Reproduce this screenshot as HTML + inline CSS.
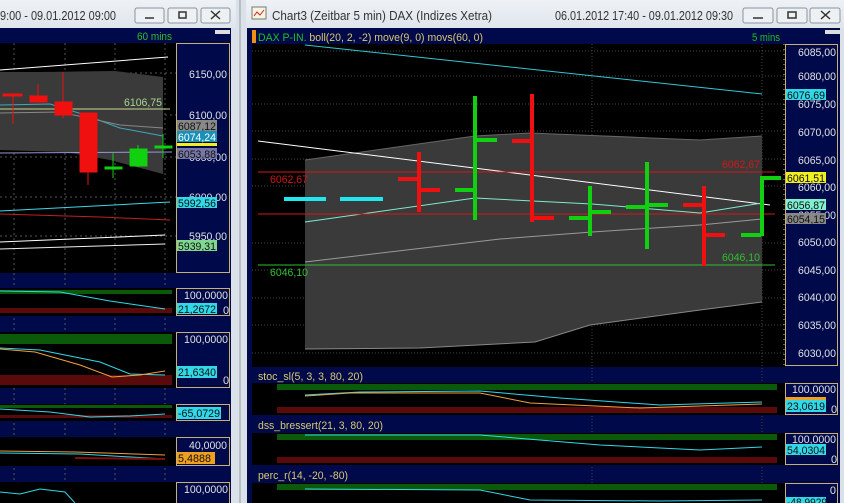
<!DOCTYPE html>
<html><head><meta charset="utf-8"><style>
html,body{margin:0;padding:0;width:844px;height:503px;overflow:hidden;background:#dde3ea;font-family:"Liberation Sans",sans-serif}
svg{display:block}
</style></head><body>
<svg width="844" height="503" xmlns="http://www.w3.org/2000/svg" font-family="Liberation Sans, sans-serif">
<defs>
<linearGradient id="tb" x1="0" y1="0" x2="0" y2="1"><stop offset="0" stop-color="#eef2f6"/><stop offset="1" stop-color="#dfe5ec"/></linearGradient>
</defs>
<rect width="844" height="503" fill="#dbe1e8"/>
<rect x="0" y="0" width="236" height="28" fill="url(#tb)"/>
<rect x="246" y="0" width="598" height="28" fill="url(#tb)"/>
<line x1="240" y1="0" x2="240" y2="503" stroke="#b8bec6" stroke-width="2"/>
<text x="0" y="20" font-size="13" fill="#333" textLength="116" lengthAdjust="spacingAndGlyphs">9:00 - 09.01.2012 09:00</text>
<g fill="none" stroke="#8a949e"><rect x="135" y="8" width="29" height="15" rx="2" fill="#eef1f4"/><rect x="168" y="8" width="29" height="15" rx="2" fill="#eef1f4"/><rect x="201" y="8" width="29" height="15" rx="2" fill="#eef1f4"/>
<rect x="743" y="8" width="30" height="15" rx="2" fill="#eef1f4"/><rect x="777" y="8" width="30" height="15" rx="2" fill="#eef1f4"/><rect x="810" y="8" width="30" height="15" rx="2" fill="#eef1f4"/></g>
<g stroke="#333" stroke-width="1.5" fill="none"><line x1="145" y1="18" x2="154" y2="18"/><rect x="179" y="12" width="7" height="6"/><path d="M211 11l9 8M220 11l-9 8"/>
<line x1="753" y1="18" x2="763" y2="18"/><rect x="788" y="12" width="8" height="6"/><path d="M821 11l9 8M830 11l-9 8"/></g>
<rect x="252" y="7" width="14" height="12" fill="#f4f4e0" stroke="#777"/><path d="M254 16l3-4 3 3 4-5" stroke="#c22" fill="none"/>
<text x="272" y="20" font-size="13" fill="#333" textLength="220" lengthAdjust="spacingAndGlyphs">Chart3 (Zeitbar 5 min)  DAX (Indizes Xetra)</text>
<text x="555" y="20" font-size="13" fill="#333" textLength="178" lengthAdjust="spacingAndGlyphs">06.01.2012 17:40 - 09.01.2012 09:30</text>

<rect x="0" y="28" width="231" height="475" fill="#000a4a"/>
<rect x="0" y="43" width="176" height="230" fill="#000"/>
<text x="137" y="40" font-size="11" fill="#2fbf2f" textLength="35" lengthAdjust="spacingAndGlyphs">60 mins</text>
<rect x="215" y="30" width="15" height="4" fill="#ddd"/>
<g stroke="#555" stroke-dasharray="2,3"><line x1="14" y1="43" x2="14" y2="503"/><line x1="65" y1="43" x2="65" y2="503"/><line x1="115" y1="43" x2="115" y2="503"/><line x1="165" y1="43" x2="165" y2="503"/>
<line x1="0" y1="73" x2="176" y2="73"/><line x1="0" y1="115" x2="176" y2="115"/><line x1="0" y1="157" x2="176" y2="157"/><line x1="0" y1="197" x2="176" y2="197"/><line x1="0" y1="236" x2="176" y2="236"/></g>
<path d="M0 72L40 72L115 71L163 77L163 174L110 160L65 152L0 150Z" fill="#3a3a3a"/>
<line x1="0" y1="70" x2="168" y2="57" stroke="#fff"/>
<line x1="0" y1="109" x2="170" y2="109" stroke="#c8d890"/>
<path d="M0 105L50 104L85 115L120 128L163 136" stroke="#3aa8c0" fill="none"/>
<path d="M0 113L60 112L120 125L163 128" stroke="#888" fill="none"/>
<line x1="0" y1="153" x2="172" y2="152" stroke="#9898d8"/>
<path d="M0 211L170 202" stroke="#3cd8e8" fill="none"/>
<path d="M0 214L100 217L170 220" stroke="#c02020" fill="none"/>
<path d="M0 242L165 235" stroke="#fff" fill="none"/><path d="M0 249L165 244" stroke="#eee" fill="none"/>
<text x="124" y="106" font-size="11" fill="#a8d890" textLength="38" lengthAdjust="spacingAndGlyphs">6106,75</text>
<g fill="#f01010" stroke="#f01010"><line x1="13" y1="95" x2="13" y2="124"/><rect x="3" y="94" width="19" height="2"/>
<line x1="38" y1="84" x2="38" y2="103"/><rect x="30" y="96" width="17" height="6"/>
<line x1="63" y1="72" x2="63" y2="118"/><rect x="55" y="102" width="17" height="13"/>
<line x1="88" y1="113" x2="88" y2="185"/><rect x="80" y="113" width="17" height="59"/></g>
<g fill="#10d010" stroke="#10d010"><line x1="113" y1="153" x2="113" y2="178"/><rect x="105" y="167" width="17" height="2"/>
<line x1="138" y1="145" x2="138" y2="167"/><rect x="130" y="149" width="17" height="17"/>
<line x1="163" y1="134" x2="163" y2="158"/><rect x="155" y="146" width="17" height="2"/></g>
<rect x="176.5" y="43.5" width="53" height="229" fill="#000a4a" stroke="#c8b070"/>
<g font-size="11" fill="#e0e0e0"><text x="189" y="78" textLength="38" lengthAdjust="spacingAndGlyphs">6150,00</text><text x="189" y="119" textLength="38" lengthAdjust="spacingAndGlyphs">6100,00</text><text x="189" y="161" textLength="38" lengthAdjust="spacingAndGlyphs">6050,00</text><text x="189" y="201" textLength="38" lengthAdjust="spacingAndGlyphs">6000,00</text><text x="189" y="240" textLength="38" lengthAdjust="spacingAndGlyphs">5950,00</text></g>
<g font-size="11" fill="#111"><rect x="177" y="120" width="40" height="11" fill="#888"/><text x="178" y="130" textLength="38" lengthAdjust="spacingAndGlyphs">6087,12</text>
<rect x="177" y="131" width="40" height="11" fill="#1890b8"/><text x="178" y="141" fill="#fff" textLength="38" lengthAdjust="spacingAndGlyphs">6074,24</text>
<rect x="177" y="143" width="40" height="3" fill="#f0f020"/>
<rect x="177" y="148" width="40" height="11" fill="#7878a8"/><text x="178" y="158" textLength="38" lengthAdjust="spacingAndGlyphs">6053,88</text>
<rect x="177" y="197" width="40" height="11" fill="#30d8e8"/><text x="178" y="207" textLength="38" lengthAdjust="spacingAndGlyphs">5992,56</text>
<rect x="177" y="240" width="40" height="11" fill="#80d890"/><text x="178" y="250" textLength="38" lengthAdjust="spacingAndGlyphs">5939,31</text></g>

<rect x="0" y="288" width="176" height="28" fill="#000"/>
<rect x="0" y="290" width="172" height="4" fill="#0a5a0a"/><rect x="0" y="308" width="172" height="5" fill="#5a0a0a"/>
<path d="M0 291L60 292L110 301L165 309" stroke="#30d8e8" fill="none"/>
<rect x="176.5" y="288.5" width="53" height="27" fill="#000a4a" stroke="#c8b070"/>
<text x="184" y="299" font-size="11" fill="#e0e0e0" textLength="44" lengthAdjust="spacingAndGlyphs">100,0000</text>
<rect x="177" y="303" width="40" height="11" fill="#30d8e8"/><text x="178" y="313" font-size="11" fill="#111" textLength="38" lengthAdjust="spacingAndGlyphs">21,2672</text><text x="223" y="314" font-size="11" fill="#e0e0e0">0</text>

<rect x="0" y="332" width="176" height="56" fill="#000"/>
<rect x="0" y="334" width="172" height="10" fill="#0a5a0a"/><rect x="0" y="375" width="172" height="10" fill="#5a0a0a"/>
<path d="M0 348L40 350L100 362L130 374L165 375" stroke="#30d8e8" fill="none"/>
<path d="M0 349L35 352L80 365L112 377L140 375L165 371" stroke="#f0a040" fill="none"/>
<rect x="176.5" y="332.5" width="53" height="55" fill="#000a4a" stroke="#c8b070"/>
<text x="184" y="343" font-size="11" fill="#e0e0e0" textLength="44" lengthAdjust="spacingAndGlyphs">100,0000</text>
<rect x="177" y="366" width="40" height="12" fill="#30d8e8"/><text x="178" y="376" font-size="11" fill="#111" textLength="38" lengthAdjust="spacingAndGlyphs">21,6340</text><text x="223" y="384" font-size="11" fill="#e0e0e0">0</text>

<rect x="0" y="404" width="176" height="17" fill="#000"/>
<rect x="0" y="405" width="172" height="3" fill="#0a5a0a"/><rect x="0" y="415" width="172" height="3" fill="#5a0a0a"/>
<path d="M0 409L50 412L90 417L130 416L165 414" stroke="#30d8e8" fill="none"/>
<rect x="176.5" y="404.5" width="53" height="16" fill="#000a4a" stroke="#c8b070"/>
<rect x="177" y="407" width="44" height="12" fill="#30d8e8"/><text x="178" y="417" font-size="11" fill="#111" textLength="42" lengthAdjust="spacingAndGlyphs">-65,0729</text>

<rect x="0" y="437" width="176" height="29" fill="#000"/>
<path d="M0 451L75 452L165 455" stroke="#f0a040" fill="none"/><path d="M0 453L80 454L165 459" stroke="#30d8e8" fill="none"/>
<path d="M75 458L165 459" stroke="#801010" stroke-width="2" fill="none"/>
<rect x="176.5" y="437.5" width="53" height="28" fill="#000a4a" stroke="#c8b070"/>
<text x="189" y="449" font-size="11" fill="#e0e0e0" textLength="38" lengthAdjust="spacingAndGlyphs">40,0000</text>
<rect x="177" y="452" width="38" height="12" fill="#f0a020"/><text x="178" y="462" font-size="11" fill="#111" textLength="33" lengthAdjust="spacingAndGlyphs">5,4888</text>

<rect x="0" y="482" width="176" height="21" fill="#000"/>
<path d="M0 492L20 494L40 489L65 492L75 503" stroke="#30d8e8" fill="none"/>
<rect x="176.5" y="482.5" width="53" height="25" fill="#000a4a" stroke="#c8b070"/>
<text x="184" y="493" font-size="11" fill="#e0e0e0" textLength="44" lengthAdjust="spacingAndGlyphs">100,0000</text>

<rect x="247" y="28" width="597" height="475" fill="#000a4a"/>
<rect x="252" y="30" width="4" height="13" fill="#f09010"/>
<text x="258" y="41" font-size="11" fill="#20c020" textLength="225" lengthAdjust="spacingAndGlyphs">DAX P-IN.<tspan fill="#d8c870"> boll(20, 2, -2) move(9, 0) movs(60, 0)</tspan></text>
<text x="752" y="41" font-size="11" fill="#20c020" textLength="28" lengthAdjust="spacingAndGlyphs">5 mins</text>
<rect x="825" y="30" width="15" height="4" fill="#ddd"/>
<rect x="252" y="44" width="533" height="323" fill="#000"/>
<g stroke="#444" stroke-dasharray="1,2"><line x1="592" y1="44" x2="592" y2="503"/><line x1="762" y1="44" x2="762" y2="503"/>
<line x1="252" y1="51" x2="785" y2="51"/><line x1="252" y1="76" x2="785" y2="76"/><line x1="252" y1="104" x2="785" y2="104"/><line x1="252" y1="131" x2="785" y2="131"/><line x1="252" y1="159" x2="785" y2="159"/><line x1="252" y1="186" x2="785" y2="186"/><line x1="252" y1="243" x2="785" y2="243"/><line x1="252" y1="270" x2="785" y2="270"/><line x1="252" y1="298" x2="785" y2="298"/><line x1="252" y1="325" x2="785" y2="325"/><line x1="252" y1="353" x2="785" y2="353"/></g>
<path d="M305 160L475 136L530 133L620 136L700 140L762 136L762 302L700 310L590 325L535 342L420 348L305 349Z" fill="#3a3a3a"/>
<path d="M305 349L420 348L535 342L590 325L700 310L762 302" stroke="#888" fill="none"/>
<path d="M305 160L475 136L530 133L700 140L762 136" stroke="#666" fill="none"/>
<line x1="305" y1="45" x2="762" y2="94" stroke="#30c8d8"/>
<line x1="258" y1="141" x2="770" y2="205" stroke="#fff"/>
<path d="M305 222L475 198L592 204L700 213L762 203" stroke="#80e8d0" fill="none"/>
<path d="M305 262L500 239L592 232L700 225L762 219" stroke="#999" fill="none"/>
<line x1="258" y1="172" x2="775" y2="172" stroke="#d01818"/>
<line x1="258" y1="214" x2="775" y2="214" stroke="#d01818"/>
<line x1="258" y1="265" x2="775" y2="265" stroke="#30c030"/>
<g font-size="11"><text x="270" y="183" fill="#d01818" textLength="38" lengthAdjust="spacingAndGlyphs">6062,67</text><text x="722" y="168" fill="#d01818" textLength="38" lengthAdjust="spacingAndGlyphs">6062,67</text><text x="270" y="276" fill="#30c030" textLength="38" lengthAdjust="spacingAndGlyphs">6046,10</text><text x="722" y="261" fill="#30c030" textLength="38" lengthAdjust="spacingAndGlyphs">6046,10</text></g>
<g fill="#20e8f0"><rect x="284" y="197" width="42" height="4"/><rect x="340" y="197" width="43" height="4"/></g>
<g fill="#f01010"><rect x="417" y="152" width="4" height="60"/><rect x="398" y="177" width="20" height="4"/><rect x="420" y="188" width="20" height="4"/>
<rect x="530" y="94" width="4" height="128"/><rect x="512" y="139" width="20" height="4"/><rect x="533" y="216" width="21" height="4"/>
<rect x="702" y="186" width="4" height="80"/><rect x="683" y="203" width="20" height="4"/><rect x="705" y="233" width="20" height="4"/></g>
<g fill="#10d010"><rect x="473" y="96" width="4" height="124"/><rect x="455" y="188" width="20" height="4"/><rect x="476" y="138" width="21" height="4"/>
<rect x="588" y="186" width="4" height="50"/><rect x="569" y="216" width="20" height="4"/><rect x="591" y="210" width="20" height="4"/>
<rect x="645" y="162" width="4" height="87"/><rect x="626" y="205" width="20" height="4"/><rect x="648" y="203" width="20" height="4"/>
<rect x="760" y="176" width="4" height="60"/><rect x="741" y="233" width="20" height="4"/><rect x="763" y="176" width="18" height="4"/></g>
<rect x="785.5" y="44.5" width="52" height="321" fill="#000a4a" stroke="#c8b070"/>
<line x1="784" y1="44" x2="784" y2="365" stroke="#d8c870" stroke-dasharray="1,4"/>
<g font-size="11" fill="#e0e0e0"><text x="798" y="56" textLength="38" lengthAdjust="spacingAndGlyphs">6085,00</text><text x="798" y="80" textLength="38" lengthAdjust="spacingAndGlyphs">6080,00</text><text x="798" y="108" textLength="38" lengthAdjust="spacingAndGlyphs">6075,00</text><text x="798" y="136" textLength="38" lengthAdjust="spacingAndGlyphs">6070,00</text><text x="798" y="164" textLength="38" lengthAdjust="spacingAndGlyphs">6065,00</text><text x="798" y="191" textLength="38" lengthAdjust="spacingAndGlyphs">6060,00</text><text x="798" y="219" textLength="38" lengthAdjust="spacingAndGlyphs">6055,00</text><text x="798" y="246" textLength="38" lengthAdjust="spacingAndGlyphs">6050,00</text><text x="798" y="274" textLength="38" lengthAdjust="spacingAndGlyphs">6045,00</text><text x="798" y="301" textLength="38" lengthAdjust="spacingAndGlyphs">6040,00</text><text x="798" y="329" textLength="38" lengthAdjust="spacingAndGlyphs">6035,00</text><text x="798" y="357" textLength="38" lengthAdjust="spacingAndGlyphs">6030,00</text></g>
<g font-size="11" fill="#111"><rect x="786" y="89" width="40" height="11" fill="#30d8e8"/><text x="787" y="99" textLength="38" lengthAdjust="spacingAndGlyphs">6076,69</text>
<rect x="786" y="172" width="40" height="11" fill="#f0f020"/><text x="787" y="182" textLength="38" lengthAdjust="spacingAndGlyphs">6061,51</text>
<rect x="786" y="199" width="40" height="11" fill="#80f0d0"/><text x="787" y="209" textLength="38" lengthAdjust="spacingAndGlyphs">6056,87</text>
<rect x="786" y="213" width="40" height="11" fill="#888"/><text x="787" y="223" textLength="38" lengthAdjust="spacingAndGlyphs">6054,15</text></g>

<text x="258" y="380" font-size="11" fill="#d8c870" textLength="105" lengthAdjust="spacingAndGlyphs">stoc_sl(5, 3, 3, 80, 20)</text>
<rect x="252" y="383" width="533" height="32" fill="#000"/>
<rect x="277" y="384" width="500" height="6" fill="#0a5a0a"/><rect x="277" y="407" width="500" height="6" fill="#5a0a0a"/>
<path d="M305 395L360 392L480 391L560 398L660 405L762 402" stroke="#30d8e8" fill="none"/>
<path d="M305 396L350 393L480 393L530 403L640 408L700 406L762 404" stroke="#f0a040" fill="none"/>
<rect x="785.5" y="383.5" width="52" height="31" fill="#000a4a" stroke="#c8b070"/>
<text x="792" y="393" font-size="11" fill="#e0e0e0" textLength="44" lengthAdjust="spacingAndGlyphs">100,0000</text>
<rect x="786" y="397" width="40" height="3" fill="#f0a020"/><rect x="786" y="400" width="40" height="12" fill="#30d8e8"/><text x="787" y="410" font-size="11" fill="#111" textLength="38" lengthAdjust="spacingAndGlyphs">23,0619</text><text x="831" y="413" font-size="11" fill="#e0e0e0">0</text>

<text x="258" y="429" font-size="11" fill="#d8c870" textLength="125" lengthAdjust="spacingAndGlyphs">dss_bressert(21, 3, 80, 20)</text>
<rect x="252" y="433" width="533" height="32" fill="#000"/>
<rect x="277" y="434" width="500" height="6" fill="#0a5a0a"/><rect x="277" y="457" width="500" height="6" fill="#5a0a0a"/>
<path d="M305 435L480 435L600 445L700 450L762 447" stroke="#30d8e8" fill="none"/>
<rect x="785.5" y="433.5" width="52" height="31" fill="#000a4a" stroke="#c8b070"/>
<text x="792" y="443" font-size="11" fill="#e0e0e0" textLength="44" lengthAdjust="spacingAndGlyphs">100,0000</text>
<rect x="786" y="444" width="40" height="11" fill="#30d8e8"/><text x="787" y="454" font-size="11" fill="#111" textLength="38" lengthAdjust="spacingAndGlyphs">54,0304</text><text x="831" y="463" font-size="11" fill="#e0e0e0">0</text>

<text x="258" y="479" font-size="11" fill="#d8c870" textLength="90" lengthAdjust="spacingAndGlyphs">perc_r(14, -20, -80)</text>
<rect x="252" y="483" width="533" height="20" fill="#000"/>
<rect x="277" y="484" width="500" height="6" fill="#0a5a0a"/>
<path d="M305 489L480 490L530 500L660 501L762 500" stroke="#30d8e8" fill="none"/>
<rect x="785.5" y="483.5" width="52" height="25" fill="#000a4a" stroke="#c8b070"/>
<text x="836" y="494" font-size="11" fill="#e0e0e0" text-anchor="end">0</text>
<rect x="786" y="497" width="40" height="8" fill="#30d8e8"/><text x="787" y="506" font-size="11" fill="#111" textLength="40" lengthAdjust="spacingAndGlyphs">-48,9929</text>
<rect x="840" y="28" width="4" height="475" fill="#dbe1e8"/>
</svg>
</body></html>
